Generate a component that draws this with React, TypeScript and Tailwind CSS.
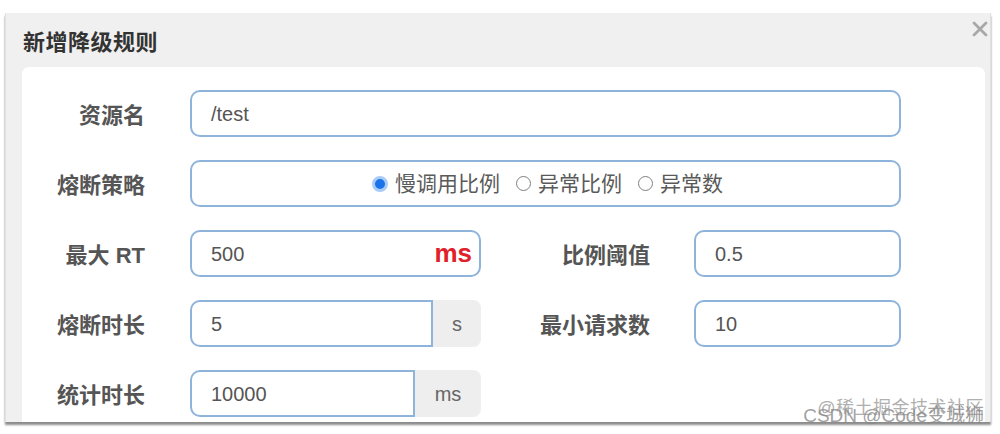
import React from "react"

const FONT = "font-['Liberation_Sans','Noto_Sans_CJK_SC',sans-serif]"

function Label({ text, width }: { text: string; width: string }) {
  return (
    <div className={`${width} shrink-0 text-right text-[22px] font-bold text-[#555] pt-[9px]`}>{text}</div>
  )
}

function Input({ value, width, addon, addonWidth }: { value: string; width: string; addon?: string; addonWidth?: string }) {
  if (addon) {
    return (
      <div className={`${width} flex h-full`}>
        <div className="flex-1 flex items-center px-[19px] border-2 border-[#8fb4dc] rounded-l-[10px] text-[20px] text-[#555]">{value}</div>
        <div className={`${addonWidth} flex items-center justify-center bg-[#eeeeee] rounded-r-[8px] text-[20px] text-[#666]`}>{addon}</div>
      </div>
    )
  }
  return (
    <div className={`${width} flex items-center h-full px-[19px] border-2 border-[#8fb4dc] rounded-[10px] text-[20px] text-[#555]`}>{value}</div>
  )
}

function Radio({ label, checked }: { label: string; checked?: boolean }) {
  return (
    <div className="flex items-center gap-[7px]">
      {checked ? (
        <span className="w-[16px] h-[16px] rounded-full border-[3px] border-[#a9cbf7] bg-[#1a73e8]" />
      ) : (
        <span className="w-[15px] h-[15px] rounded-full border-[1.5px] border-[#808080] bg-white" />
      )}
      <span className="text-[21px] text-[#5a5a5a]">{label}</span>
    </div>
  )
}

export default function App() {
  return (
    <div className={`relative w-[1000px] h-[434px] bg-white ${FONT} overflow-hidden`}>
      <div className="absolute left-[5px] top-[13px] w-[986px] h-[409px] bg-[#f0f0f0] border-l border-r border-[#e0e0e0] shadow-[0_3px_2px_rgba(0,0,0,0.45)] flex flex-col">
        {/* header */}
        <div className="h-[54px] shrink-0 flex items-center justify-between pl-[17px] pr-[2px]">
          <h2 className="text-[22px] font-bold text-[#333] tracking-[0.5px] mt-[4px]">新增降级规则</h2>
          <svg width="16" height="16" viewBox="0 0 16 16" className="self-start mt-[8px]">
            <path d="M2 2 L14 14 M14 2 L2 14" stroke="#a8a8a8" strokeWidth="2.8" strokeLinecap="round" />
          </svg>
        </div>

        {/* body */}
        <div className="flex-1 pl-[16px] pr-[5px]">
          <div className="h-full bg-white rounded-t-[7px] pt-[23px] pr-[84px] flex flex-col gap-[23px]">
            <div className="flex h-[47px] gap-[45px]">
              <Label text="资源名" width="w-[123px]" />
              <Input value="/test" width="flex-1" />
            </div>

            <div className="flex h-[47px] gap-[45px]">
              <Label text="熔断策略" width="w-[123px]" />
              <div className="flex-1 h-full flex items-center justify-center gap-[16px] pl-[4px] border-2 border-[#8fb4dc] rounded-[10px]">
                <Radio label="慢调用比例" checked />
                <Radio label="异常比例" />
                <Radio label="异常数" />
              </div>
            </div>

            <div className="flex h-[47px]">
              <Label text="最大 RT" width="w-[123px]" />
              <div className="ml-[45px] w-[291px] h-full flex items-center justify-between pl-[19px] pr-[7px] border-2 border-[#8fb4dc] rounded-[10px]">
                <span className="text-[20px] text-[#555]">500</span>
                <span className="text-[26px] font-bold text-[#e0202a]">ms</span>
              </div>
              <Label text="比例阈值" width="w-[169px]" />
              <div className="ml-[44px] flex-1 h-full">
                <Input value="0.5" width="w-full" />
              </div>
            </div>

            <div className="flex h-[47px]">
              <Label text="熔断时长" width="w-[123px]" />
              <div className="ml-[45px] h-full">
                <Input value="5" width="w-[291px]" addon="s" addonWidth="w-[48px]" />
              </div>
              <Label text="最小请求数" width="w-[169px]" />
              <div className="ml-[44px] flex-1 h-full">
                <Input value="10" width="w-full" />
              </div>
            </div>

            <div className="flex h-[47px]">
              <Label text="统计时长" width="w-[123px]" />
              <div className="ml-[45px] h-full">
                <Input value="10000" width="w-[291px]" addon="ms" addonWidth="w-[66px]" />
              </div>
            </div>
          </div>
        </div>
      </div>

      {/* watermarks */}
      <div className="absolute right-[16px] top-[395px] text-[18px] text-[#9a9a9a]/80 tracking-[0.5px]">@稀土掘金技术社区</div>
      <div className="absolute right-[16px] top-[402px] text-[19px] text-[#888]/80">CSDN @Code变城狮</div>
    </div>
  )
}
